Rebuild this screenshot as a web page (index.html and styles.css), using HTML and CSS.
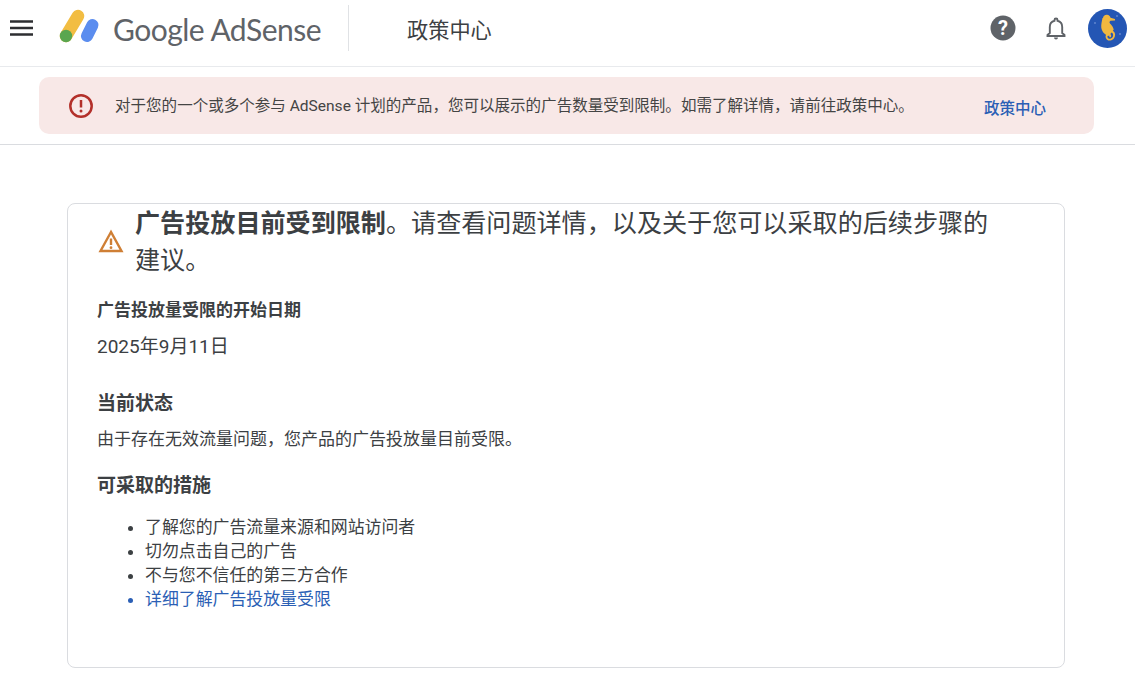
FILE: index.html
```html
<!DOCTYPE html>
<html lang="zh-CN">
<head>
<meta charset="utf-8">
<title>政策中心</title>
<link rel="stylesheet" href="styles.css">
</head>
<body>
<header class="topbar">
  <svg class="menu" width="24" height="16" viewBox="0 0 24 16"><path d="M0 1.500h23M0 8h23M0 14.500h23" stroke="#2d2e31" stroke-width="2.400" fill="none"/></svg>
  <svg class="logo" width="42" height="44" viewBox="0 0 42 44">
    <path d="M7 29L19 9" stroke="#f2bd42" stroke-width="12.500" stroke-linecap="round" fill="none"/>
    <path d="M28 29L33.500 18" stroke="#5b8def" stroke-width="12" stroke-linecap="round" fill="none"/>
    <circle cx="7" cy="29" r="6.200" fill="#5aa64f"/>
  </svg>
  <div class="brand">Google AdSense</div>
  <div class="divider"></div>
  <div class="pagename">政策中心</div>
  <div class="actions">
    <svg class="help" width="26" height="26" viewBox="0 0 26 26"><circle cx="13" cy="13" r="12.500" fill="#5f6368"/><text x="13" y="20" text-anchor="middle" class="helpmark">?</text></svg>
    <svg class="bell" width="24" height="26" viewBox="0 0 24 26"><path d="M12 3.500a1.500 1.500 0 0 0-1.500 1.500v.8C7.500 6.500 5.800 9 5.800 12v6l-2.300 2v1h17v-1l-2.300-2v-6c0-3-1.700-5.500-4.700-6.200V5A1.500 1.500 0 0 0 12 3.500z" fill="none" stroke="#5f6368" stroke-width="1.900"/><path d="M10 22.500h4a2 2 0 0 1-4 0z" fill="#5f6368"/></svg>
    <svg class="avatar" width="39" height="39" viewBox="0 0 39 39">
      <circle cx="19.500" cy="19.500" r="19.500" fill="#2456b4"/>
      <circle cx="29" cy="7" r=".7" fill="#9db8ea"/><circle cx="7" cy="14" r=".7" fill="#9db8ea"/><circle cx="32" cy="25" r=".7" fill="#9db8ea"/>
      <path d="M15 9c0-2 2-3.500 4-3.300 2 .2 3 1.300 3.500 3l4.500 1.300v1.600l-4.500.2c-1 .7-1.300 1.700-.5 2.700 1.500 1.800 3.500 3.500 3.700 6.300l-4.700 6c-3.500-.5-7-3.500-7.700-8-.4-3.500.7-6.800 1.200-9.800z" fill="#f0b840"/>
      <path d="M23 22c2.500 1 3.600 3.400 2.800 5.700-.9 2.600-4.200 3.800-6.200 2.200-1.700-1.300-1.400-3.800.3-4.400 1.400-.5 2.700.6 2.300 1.800" fill="none" stroke="#f0b840" stroke-width="1.900" stroke-linecap="round"/>
    </svg>
  </div>
</header>
<section class="notice-wrap">
  <div class="notice">
    <svg class="notice-icon" width="26" height="26" viewBox="0 0 26 26"><circle cx="13" cy="13" r="10.700" fill="none" stroke="#b3302a" stroke-width="2.500"/><path d="M13 7v7.500" stroke="#b3302a" stroke-width="2.500"/><circle cx="13" cy="18" r="1.500" fill="#b3302a"/></svg>
    <p class="notice-text">对于您的一个或多个参与 AdSense 计划的产品，您可以展示的广告数量受到限制。如需了解详情，请前往政策中心。</p>
    <a class="notice-link">政策中心</a>
  </div>
</section>
<main class="card">
  <div class="headline">
    <svg class="warn" width="26" height="24" viewBox="0 0 26 24"><path d="M13 3L2.500 22h21z" fill="none" stroke="#cf7f35" stroke-width="2.400" stroke-linejoin="miter"/><path d="M13 9.500v6.500" stroke="#cf7f35" stroke-width="2.400"/><circle cx="13" cy="18.700" r="1.400" fill="#cf7f35"/></svg>
    <h1 class="title"><strong>广告投放目前受到限制</strong>。请查看问题详情，以及关于您可以采取的后续步骤的建议。</h1>
  </div>
  <h2 class="label">广告投放量受限的开始日期</h2>
  <p class="date">2025年9月11日</p>
  <h3 class="section status">当前状态</h3>
  <p class="body">由于存在无效流量问题，您产品的广告投放量目前受限。</p>
  <h3 class="section actions-title">可采取的措施</h3>
  <ul class="steps">
    <li>了解您的广告流量来源和网站访问者</li>
    <li>切勿点击自己的广告</li>
    <li>不与您不信任的第三方合作</li>
    <li class="link-item"><a>详细了解广告投放量受限</a></li>
  </ul>
</main>
</body>
</html>
```
FILE: styles.css
```css
* { box-sizing: border-box; }
html, body { margin: 0; padding: 0; background: #fff; }
body {
  width: 1135px;
  height: 685px;
  overflow: hidden;
  font-family: Roboto, "Noto Sans CJK SC", sans-serif;
  color: #3c4043;
}
.topbar {
  height: 67px;
  border-bottom: 1px solid #e8eaed;
  display: flex;
  align-items: center;
  padding: 0 8px 10px 10px;
}
.menu { flex: none; margin-right: 25px; }
.logo { flex: none; margin-right: 12px; margin-top: 2px; }
.brand {
  font-family: Lato, sans-serif;
  font-size: 30px;
  letter-spacing: -0.500px;
  color: #5f6368;
  width: 208px;
  white-space: nowrap;
  margin-top: 2px;
}
.divider { width: 1px; height: 46px; background: #e0e2e5; margin: 0 58px 0 27px; }
.pagename { font-size: 21.200px; color: #3c4043; }
.actions { margin-left: auto; display: flex; align-items: center; }
.help { margin-right: 28px; }
.helpmark { font: 700 20px Roboto, sans-serif; fill: #fff; }
.bell { margin-right: 20px; }
.avatar { display: block; }
.notice-wrap {
  height: 78px;
  border-bottom: 1px solid #dadce0;
  padding: 10px 41px 0 39px;
}
.notice {
  height: 57px;
  border-radius: 10px;
  background: #f8e8e7;
  display: flex;
  align-items: center;
  padding: 0 48px 0 29px;
}
.notice-icon { flex: none; margin-right: 21px; }
.notice-text { margin: 0 0 3px; font-size: 15.540px; color: #444; white-space: nowrap; }
.notice-link { margin-left: auto; margin-top: 3px; font-size: 15.500px; font-weight: 500; color: #2b5fb5; }
.card {
  margin: 58px 70px 0 67px;
  height: 465px;
  border: 1px solid #dadce0;
  border-radius: 8px;
  padding: 1px 29px 0;
}
.headline { display: flex; align-items: center; }
.warn { flex: none; margin-right: 11px; margin-left: 1px; margin-bottom: 2px; }
.title {
  margin: 0;
  max-width: 866px;
  font-size: 25.100px;
  line-height: 37px;
  font-weight: 400;
  color: #3c4043;
}
.title strong { font-weight: 700; }
.label { margin: 18px 0 0; font-size: 17px; line-height: 26px; font-weight: 700; color: #3c4043; }
.date { margin: 10px 0 0; font-size: 19px; line-height: 28px; }
.section { margin: 0; font-size: 19px; line-height: 28px; font-weight: 700; }
.status { margin-top: 29px; }
.body { margin: 9px 0 0; font-size: 17px; line-height: 24px; }
.actions-title { margin-top: 21px; }
.steps { margin: 15px 0 0; padding: 0 0 0 48px; font-size: 16.900px; line-height: 24px; }
.link-item { color: #2b5fb5; }
```
